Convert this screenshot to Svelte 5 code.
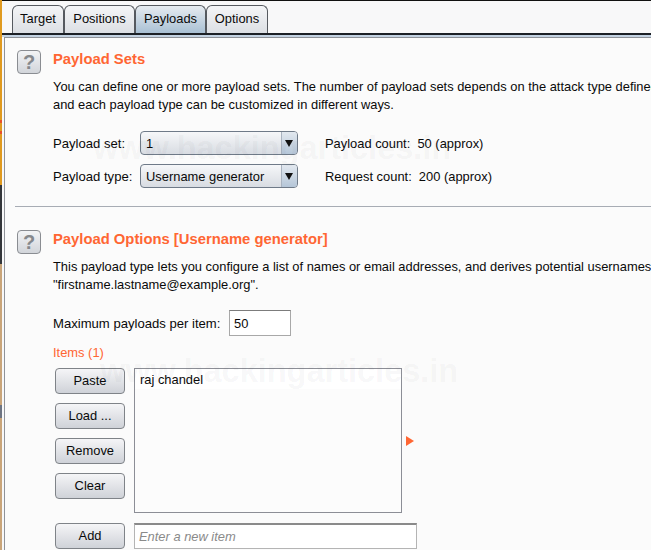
<script>
const tabs = ["Target", "Positions", "Payloads", "Options"];
const active = "Payloads";
const buttons = ["Paste", "Load ...", "Remove", "Clear"];
</script>

<div class="window">
	<div class="edge"></div>
	<div class="main">
		<div class="tabbar">
			{#each tabs as tab}
				<div class="tab" class:active={tab === active}>{tab}</div>
			{/each}
		</div>
		<div class="panel">
			<section class="sets">
				<div class="help">?</div>
				<div class="content">
					<h2>Payload Sets</h2>
					<p class="desc">You can define one or more payload sets. The number of payload sets depends on the attack type defined in the Positions tab.<br />and each payload type can be customized in different ways.</p>
					<div class="form">
						<span class="label">Payload set:</span>
						<div class="select"><span class="value">1</span><span class="arrow"></span></div>
						<span class="count">Payload count:&nbsp; 50 (approx)</span>
						<span class="label">Payload type:</span>
						<div class="select"><span class="value">Username generator</span><span class="arrow"></span></div>
						<span class="count">Request count:&nbsp; 200 (approx)</span>
					</div>
				</div>
			</section>
			<hr />
			<section class="options">
				<div class="help">?</div>
				<div class="content">
					<h2>Payload Options [Username generator]</h2>
					<p class="desc">This payload type lets you configure a list of names or email addresses, and derives potential usernames from them.<br />"firstname.lastname@example.org".</p>
					<div class="max-row">
						<span class="max-label">Maximum payloads per item:</span>
						<div class="text-input">50</div>
					</div>
					<div class="items-label">Items (1)</div>
					<div class="list-row">
						<div class="btn-col">
							{#each buttons as b}
								<div class="btn">{b}</div>
							{/each}
						</div>
						<div class="listbox"><div class="list-item">raj chandel</div></div>
						<span class="marker"></span>
					</div>
					<div class="add-row">
						<div class="btn">Add</div>
						<div class="add-input">Enter a new item</div>
					</div>
				</div>
			</section>
			<div class="watermark one">www.hackingarticles.in</div>
			<div class="watermark two">www.hackingarticles.in</div>
		</div>
	</div>
</div>

<style>
:global(body) {
	margin: 0;
	background: #fbfbfb;
	overflow: hidden;
}
.window {
	display: flex;
	width: 651px;
	height: 550px;
	overflow: hidden;
	font-family: "Liberation Sans", Arial, sans-serif;
	font-size: 12.9px;
	color: #0a0a0a;
	background: #f8f8f9;
}
.edge {
	width: 2px;
	flex: none;
	background: linear-gradient(
		#e09a20 0 120px,
		#e8502a 120px 123px,
		#e09a20 123px 131px,
		#e8502a 131px 134px,
		#e09a20 134px 185px,
		#33363a 185px 264px,
		#c9a57a 264px 405px,
		#6d7482 405px 418px,
		#c9a57a 418px
	);
}
.main {
	flex: 1;
	min-width: 0;
}
.tabbar {
	display: grid;
	grid-template-columns: 52px 71px 71px 62px;
	height: 35px;
	box-sizing: border-box;
	padding: 4px 0 0 10px;
	border-top: 1px solid #111;
	border-bottom: 2px solid #1c2026;
	box-shadow: 0 2px 0 #c3d2e2;
}
.tab {
	height: 28px;
	box-sizing: border-box;
	padding-top: 5px;
	border: 1px solid #55595f;
	border-bottom: none;
	border-radius: 6px 6px 0 0;
	background: linear-gradient(#f4f5f7, #dcdfe4);
	text-align: center;
}
.tab.active {
	background: linear-gradient(#e6ebf0, #a9c0d4);
}
.panel {
	position: relative;
	margin: 2px 0 0 2px;
	height: 520px;
	padding: 0 0 0 10px;
	border-left: 1px solid #8f9298;
	border-top: 1px solid #8f9298;
	background: #fbfbfb;
	white-space: nowrap;
}
section {
	display: flex;
	gap: 12px;
	padding-left: 2px;
}
.sets {
	padding-top: 12px;
}
.options {
	padding-top: 23px;
}
.help {
	width: 24px;
	height: 24px;
	box-sizing: border-box;
	border: 1px solid #8a8d92;
	border-radius: 4px;
	background: linear-gradient(#f2f3f5, #d2d5da);
	color: #85888c;
	font-size: 20px;
	font-weight: bold;
	line-height: 22px;
	text-align: center;
	flex: none;
}
h2 {
	margin: 0;
	font-size: 14.8px;
	line-height: 18px;
	font-weight: bold;
	color: #ff6633;
}
.desc {
	margin: 10px 0 0;
	line-height: 18px;
}
.form {
	display: grid;
	grid-template-columns: 87px 160px auto;
	row-gap: 9px;
	align-items: center;
	margin-top: 17px;
}
.label,
.max-label {
	font-size: 13.1px;
}
.count {
	padding-left: 25px;
}
.select {
	display: flex;
	width: 158px;
	height: 24px;
	box-sizing: border-box;
	border: 1px solid #6f7a88;
	border-radius: 4px;
	background: linear-gradient(#f6f7f9, #d8dce2);
	overflow: hidden;
}
.value {
	flex: 1;
	padding: 4px 5px;
}
.arrow {
	width: 15px;
	border-left: 1px solid #a9b3c0;
	background: linear-gradient(#e2e8ef, #b5c6d8);
	position: relative;
}
.arrow::after {
	content: "";
	position: absolute;
	left: 3px;
	top: 8px;
	border: 4px solid transparent;
	border-top: 7px solid #111;
	border-bottom: none;
}
hr {
	margin: 18px 0 0 0;
	border: none;
	border-top: 1px solid #a7acb4;
}
.max-row {
	display: flex;
	align-items: center;
	margin-top: 16px;
}
.max-label {
	width: 176px;
}
.text-input {
	width: 62px;
	height: 26px;
	box-sizing: border-box;
	padding: 5px 4px;
	background: #fff;
	border: 1px solid #a8a8a8;
	border-top-color: #7c7c7c;
}
.items-label {
	margin-top: 8px;
	line-height: 18px;
	color: #ff6633;
}
.list-row {
	display: flex;
	margin-top: 6px;
	position: relative;
}
.btn-col {
	display: flex;
	flex-direction: column;
	gap: 9px;
	width: 79px;
	padding-left: 2px;
}
.btn {
	width: 70px;
	height: 26px;
	box-sizing: border-box;
	border: 1px solid #7f8388;
	border-radius: 4px;
	background: linear-gradient(#f5f5f7, #cfd2d8);
	text-align: center;
	line-height: 24px;
	flex: none;
}
.listbox {
	width: 268px;
	height: 145px;
	box-sizing: border-box;
	border: 1px solid #8c8e96;
	background: #fcfcfc;
}
.list-item {
	height: 20px;
	padding: 3px 5px;
	box-sizing: border-box;
	background: #fff;
}
.marker {
	margin: 68px 0 0 4px;
	border-left: 8px solid #ff6633;
	border-top: 5px solid transparent;
	border-bottom: 5px solid transparent;
	height: 0;
}
.add-row {
	display: flex;
	gap: 9px;
	margin-top: 10px;
	padding-left: 2px;
}
.add-input {
	width: 283px;
	height: 26px;
	box-sizing: border-box;
	padding: 4px 4px;
	background: #fff;
	border: 1px solid #b4b4b4;
	border-top: 2px solid #8a8a8a;
	font-style: italic;
	color: #8a8a8a;
}
.watermark {
	position: absolute;
	font-size: 32.5px;
	font-weight: bold;
	color: rgba(60, 60, 70, 0.05);
	pointer-events: none;
}
.one {
	left: 88px;
	top: 92px;
}
.two {
	left: 95px;
	top: 315px;
}
</style>
